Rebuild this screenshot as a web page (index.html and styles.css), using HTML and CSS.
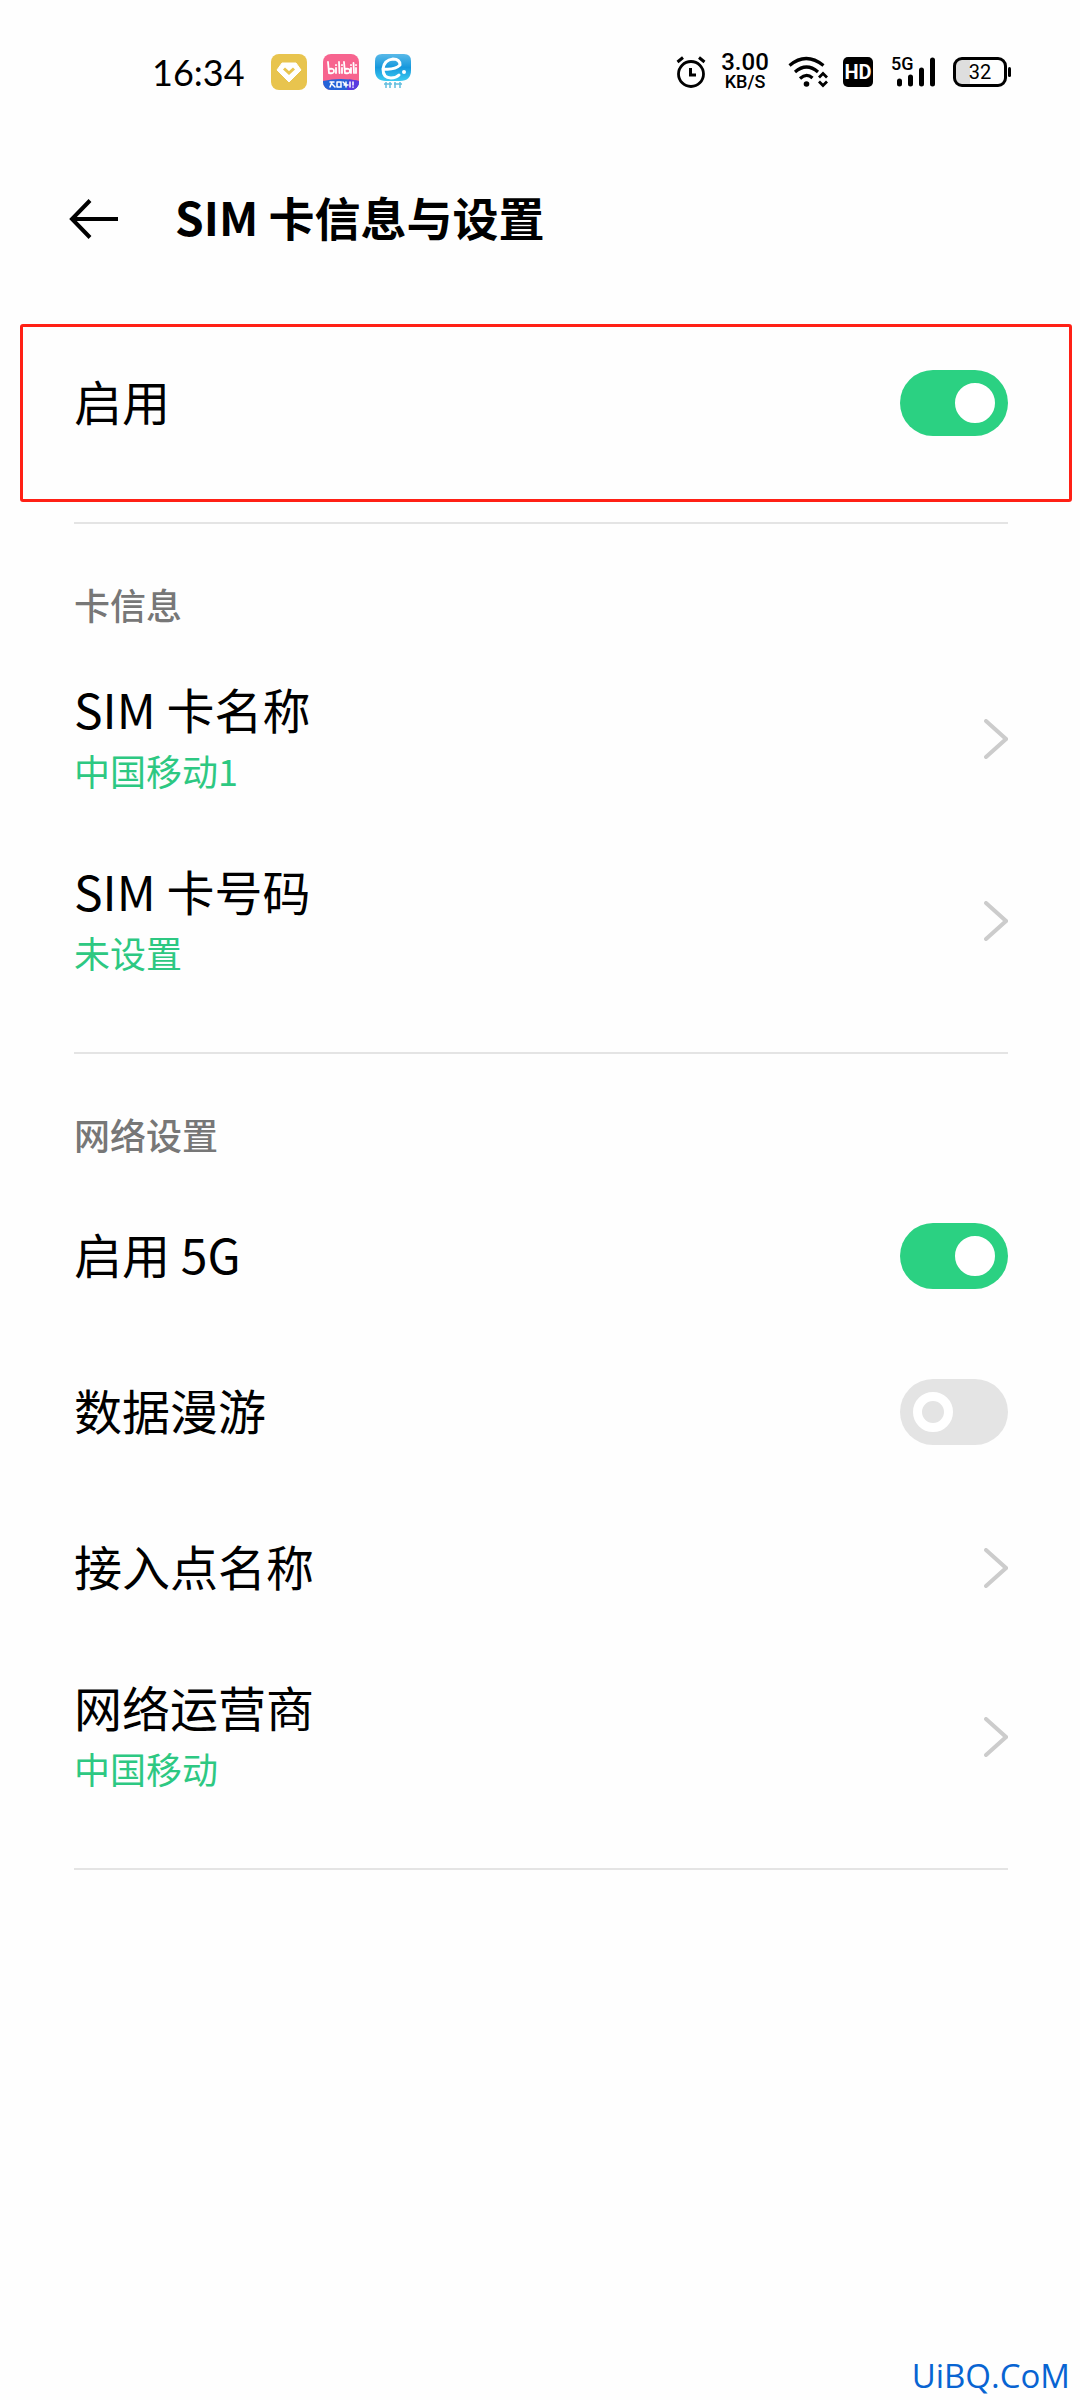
FILE: index.html
```html
<!DOCTYPE html>
<html lang="zh-CN">
<head>
<meta charset="utf-8">
<meta name="viewport" content="width=device-width, initial-scale=1">
<title>SIM 卡信息与设置</title>
<link rel="stylesheet" href="styles.css">
</head>
<body>
<div class="status">
  <span class="clock">16:34</span>
  <div class="apps">
    <svg class="app" viewBox="0 0 36 36" aria-hidden="true">
      <rect width="36" height="36" rx="8" fill="#e8c44e"/>
      <path d="M11 9h14l5 7-12 12L6 16z" fill="#fff" stroke="#fff" stroke-width="1" stroke-linejoin="round"/>
      <path d="M13 14.500l5 4.500 5-4.500" fill="none" stroke="#e8c44e" stroke-width="3"/>
    </svg>
    <svg class="app" viewBox="0 0 36 36" aria-hidden="true">
      <defs><clipPath id="round"><rect width="36" height="36" rx="8"/></clipPath></defs>
      <g clip-path="url(#round)">
        <rect width="36" height="36" fill="#f7648f"/>
        <path d="M0 27q18-4 36 0v9H0z" fill="#2563d8"/>
        <path d="M26 25.500q6 0 10 1.500v9H24z" fill="#5a38e0"/>
      </g>
      <g fill="none" stroke="#fff" stroke-width="1.800" stroke-linecap="round">
        <path d="M5 8l1 11q5 1 5-2t-5-2M13 14v5M13 11v.2M16 8l.5 11M19 14v5M19 11v.2M21 8l1 11q5 1 5-2t-5-2M28 14v5M28 11v.2M30.500 9l.5 10M33 14v5M33 11v.2"/>
        <path d="M7 28h4M9 28l-2 5M9 30l3 3M14 28v5M14 28h4v5h-3M20 28l2 2M23 28v5M21 31h4M27 28v5M30 28v3M30 33v.2" stroke-width="1.500"/>
      </g>
    </svg>
    <svg class="app" viewBox="0 0 36 36" aria-hidden="true">
      <defs><linearGradient id="sky" x1="0" y1="0" x2="0" y2="1"><stop offset="0" stop-color="#59b9e8"/><stop offset=".5" stop-color="#1698dd"/><stop offset="1" stop-color="#3ccbf0"/></linearGradient></defs>
      <path d="M7 0h22q7 0 7 7v9q0 11-11 11H11Q0 27 0 16V7q0-7 7-7z" fill="url(#sky)"/>
      <path d="M9 15q11 1 16-4 0-6-7-6-9 1-10 10 0 9 8 9 5 0 8-3" fill="none" stroke="#fff" stroke-width="3" stroke-linecap="round" stroke-linejoin="round"/>
      <circle cx="29" cy="18" r="2" fill="#fff"/>
      <path d="M11 28v6M15 28v6M20 28v6M25 28v6M9 30h8M19 30h8" stroke="#62bddd" stroke-width="1.500"/>
    </svg>
  </div>
  <svg class="alarm" viewBox="0 0 30 32" aria-hidden="true" fill="none" stroke="#000">
    <circle cx="15" cy="18" r="12.500" stroke-width="2.800"/>
    <path d="M14.500 12v7H20" stroke-width="3"/>
    <path d="M1.500 6l5.500-4.500M28.500 6L23 1.500" stroke-width="3"/>
  </svg>
  <div class="speed"><span class="rate">3.00</span><span class="unit">KB/S</span></div>
  <svg class="wifi" viewBox="0 0 40 32" aria-label="WLAN" fill="none" stroke="#000">
    <path d="M1.500 9.500q16.500-14 34 0M7 16q11.500-10 23 0M12 22.500q6.500-6 12.500-.5" stroke-width="3.200"/>
    <circle cx="18.500" cy="28" r="2.800" fill="#000" stroke="none"/>
    <path d="M31 21.500l4-4 4 4M31 25.500l4 4 4-4" stroke-width="2.800"/>
  </svg>
  <span class="hd">HD</span>
  <div class="cell">
    <span class="gen">5G</span>
    <svg class="bars" viewBox="0 0 46 32" aria-hidden="true" stroke="#000" stroke-width="5" stroke-linecap="round">
      <path d="M8.500 25v3M19.500 21v7M30.500 14v14M41.500 4v24"/>
    </svg>
  </div>
  <div class="battery"><span class="level">32</span></div>
</div>

<header class="header">
  <button class="back" aria-label="返回">
    <svg viewBox="0 0 50 40" fill="none" stroke="#000" stroke-width="4"><path d="M49 20H3M21 1.500L3 20l18 18.500"/></svg>
  </button>
  <h1 class="title">SIM 卡信息与设置</h1>
</header>

<main>
  <div class="highlight">
    <label class="name" for="enable">启用</label>
    <input class="switch" id="enable" type="checkbox" role="switch" checked>
  </div>

  <section class="section">
    <h2 class="label">卡信息</h2>
    <button class="row tall">
      <span class="texts"><span class="name">SIM 卡名称</span><span class="value">中国移动1</span></span>
      <svg class="chevron" viewBox="0 0 24 40"><path d="M2 2l20 18L2 38"/></svg>
    </button>
    <button class="row tall">
      <span class="texts"><span class="name">SIM 卡号码</span><span class="value">未设置</span></span>
      <svg class="chevron" viewBox="0 0 24 40"><path d="M2 2l20 18L2 38"/></svg>
    </button>
  </section>

  <section class="section last">
    <h2 class="label">网络设置</h2>
    <div class="row">
      <label class="name" for="fiveg">启用 5G</label>
      <input class="switch" id="fiveg" type="checkbox" role="switch" checked>
    </div>
    <div class="row">
      <label class="name" for="roaming">数据漫游</label>
      <input class="switch" id="roaming" type="checkbox" role="switch">
    </div>
    <button class="row">
      <span class="name">接入点名称</span>
      <svg class="chevron" viewBox="0 0 24 40"><path d="M2 2l20 18L2 38"/></svg>
    </button>
    <button class="row tall">
      <span class="texts"><span class="name">网络运营商</span><span class="value">中国移动</span></span>
      <svg class="chevron" viewBox="0 0 24 40"><path d="M2 2l20 18L2 38"/></svg>
    </button>
  </section>
</main>

<footer class="footer">UiBQ.CoM</footer>
</body>
</html>
```
FILE: styles.css
```css
*,
*::before,
*::after {
  box-sizing: border-box;
}

body {
  margin: 0;
  min-height: 100vh;
  display: flex;
  flex-direction: column;
  background: #fefefe;
  color: #000;
  font-family: "Noto Sans CJK SC", sans-serif;
}

button {
  padding: 0;
  border: 0;
  background: none;
  color: inherit;
  font: inherit;
  text-align: left;
}

/* Status bar */
.status {
  display: flex;
  align-items: center;
  height: 144px;
  padding: 0 68px 0 152px;
}

.clock {
  width: 93px;
  font: 36px/48px Lato, sans-serif;
}

.apps {
  display: flex;
  gap: 16px;
  margin-left: 26px;
  margin-right: auto;
}

.app {
  width: 36px;
  height: 36px;
}

.alarm {
  width: 30px;
  height: 32px;
}

.speed {
  display: flex;
  flex-direction: column;
  align-items: center;
  width: 56px;
  margin-left: 11px;
  font-family: Roboto, sans-serif;
  font-weight: 500;
}

.rate {
  font-size: 24px;
  line-height: 20px;
}

.unit {
  font-size: 18px;
  line-height: 20px;
}

.wifi {
  width: 40px;
  height: 32px;
  margin-left: 15px;
}

.hd {
  width: 30px;
  margin-left: 15px;
  border-radius: 5px;
  background: #000;
  color: #fff;
  font: bold 20px/30px Roboto, sans-serif;
  text-align: center;
}

.cell {
  position: relative;
  width: 46px;
  height: 32px;
  margin-left: 18px;
}

.gen {
  position: absolute;
  top: 0;
  left: 0;
  font: 500 18px/16px Roboto, sans-serif;
}

.bars {
  width: 46px;
  height: 32px;
}

.battery {
  position: relative;
  width: 54px;
  height: 30px;
  margin-left: 16px;
  margin-right: 5px;
  border: 3px solid #000;
  border-radius: 9px;
  background: linear-gradient(90deg, #dedede 30%, transparent 30%);
  text-align: center;
}

.battery::after {
  content: "";
  position: absolute;
  top: 7px;
  right: -7px;
  width: 3px;
  height: 10px;
  border-radius: 2px;
  background: #000;
}

.level {
  display: block;
  font: 20px/25px Roboto, sans-serif;
}

/* Title bar */
.header {
  display: flex;
  align-items: center;
  height: 150px;
  padding: 0 72px 0 69px;
}

.back svg {
  display: block;
  width: 50px;
  height: 40px;
}

.title {
  margin: 0 0 0 56px;
  padding-bottom: 6px;
  font-size: 46px;
  line-height: 58px;
  font-weight: 700;
}

/* Settings */
.highlight {
  display: flex;
  align-items: center;
  justify-content: space-between;
  margin: 30px 8px 20px 20px;
  padding: 43px 61px 63px 51px;
  border: 3px solid #ff2015;
  border-radius: 3px;
}

.section {
  margin: 0 72px 0 74px;
  padding: 58px 0 40px;
  border-top: 2px solid #e4e4e4;
}

.last {
  border-bottom: 2px solid #e4e4e4;
}

.label {
  margin: 0 0 18px;
  padding-bottom: 4px;
  color: #777;
  font-size: 36px;
  line-height: 44px;
  font-weight: 500;
}

.row {
  display: flex;
  align-items: center;
  justify-content: space-between;
  width: 100%;
  min-height: 156px;
}

.tall {
  min-height: 182px;
}

.texts {
  display: flex;
  flex-direction: column;
}

.name {
  padding-bottom: 6px;
  font-size: 48px;
  line-height: 58px;
}

.value {
  padding-bottom: 2px;
  color: #2dc882;
  font-size: 36px;
  line-height: 54px;
}

.chevron {
  width: 24px;
  height: 40px;
  fill: none;
  stroke: #ccc;
  stroke-width: 4;
  stroke-linecap: round;
}

.switch {
  appearance: none;
  display: flex;
  align-items: center;
  width: 108px;
  height: 66px;
  margin: 0;
  padding: 0 13px;
  border-radius: 33px;
  background: #e4e4e4;
}

.switch::before {
  content: "";
  width: 40px;
  height: 40px;
  border: 9px solid #fff;
  border-radius: 50%;
}

.switch:checked {
  justify-content: flex-end;
  background: #2bd182;
}

.switch:checked::before {
  background: #fff;
}

.footer {
  margin-top: auto;
  padding: 0 10px 4px;
  color: #0864d2;
  font: 33px/40px "Open Sans", sans-serif;
  text-align: right;
}
```
